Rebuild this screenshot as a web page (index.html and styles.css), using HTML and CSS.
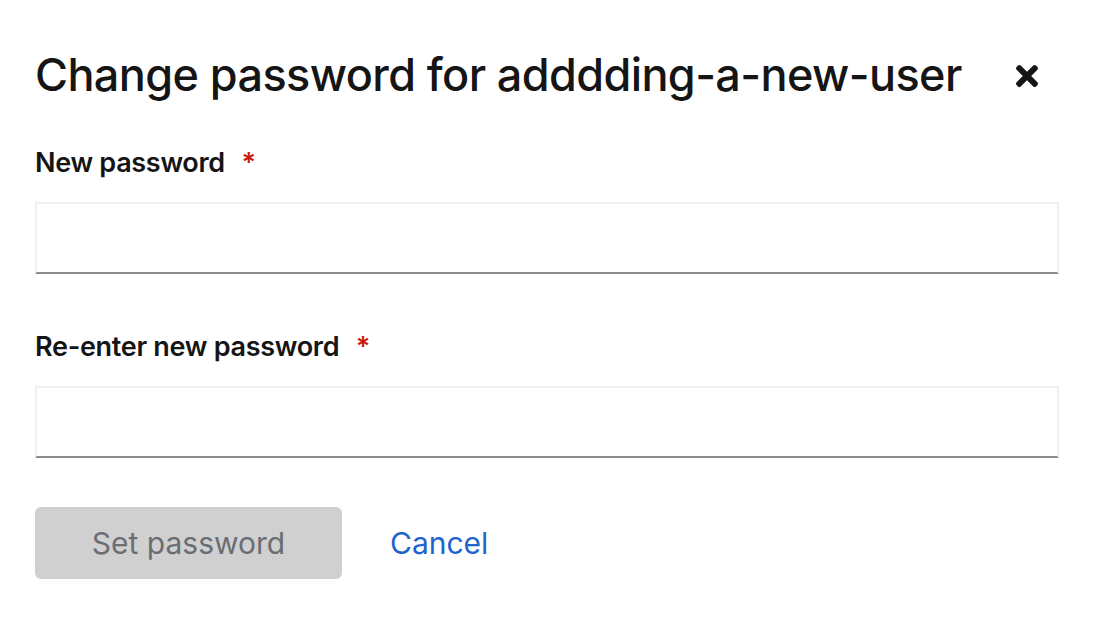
FILE: index.html
```html
<!DOCTYPE html>
<html lang="en">
<head>
    <meta charset="UTF-8">
    <meta name="viewport" content="width=device-width, initial-scale=1.0">
    <title>Change password</title>
    <link rel="stylesheet" href="styles.css">
</head>
<body>
    <div class="modal">
        <header class="modal-header">
            <h1 class="modal-title">Change password for adddding-a-new-user</h1>
            <button class="close-btn" type="button" aria-label="Close">
                <svg viewBox="0 80 352 352" width="22" height="22" aria-hidden="true">
                    <path d="M242.72 256l100.07-100.07c12.28-12.28 12.28-32.19 0-44.48l-22.24-22.24c-12.28-12.28-32.19-12.28-44.48 0L176 189.28 75.930 89.21c-12.28-12.28-32.19-12.28-44.48 0L9.21 111.45c-12.28 12.28-12.28 32.19 0 44.48L109.28 256 9.21 356.07c-12.28 12.28-12.28 32.19 0 44.48l22.24 22.240c12.28 12.28 32.2 12.28 44.48 0L176 322.72l100.07 100.07c12.28 12.28 32.2 12.28 44.480 0l22.24-22.24c12.28-12.28 12.28-32.19 0-44.48L242.72 256z"/>
                </svg>
            </button>
        </header>
        <form class="modal-form">
            <div class="form-group">
                <label for="password">New password <span class="required">*</span></label>
                <input type="password" id="password">
            </div>
            <div class="form-group">
                <label for="passwordConfirm">Re-enter new password <span class="required">*</span></label>
                <input type="password" id="passwordConfirm">
            </div>
            <div class="form-actions">
                <button type="submit" class="btn-primary" disabled>Set password</button>
                <button type="button" class="btn-link">Cancel</button>
            </div>
        </form>
    </div>
</body>
</html>
```
FILE: styles.css
```css
body {
    margin: 0;
    font-family: Inter, "Noto Sans", sans-serif;
    color: #151515;
    background: #fff;
}
.modal {
    padding: 0 39px 0 35px;
}
.modal-header {
    display: flex;
    justify-content: space-between;
    align-items: center;
    padding-top: 44px;
}
.modal-title {
    margin: 0;
    font-size: 45px;
    font-weight: 500;
    line-height: 62px;
    letter-spacing: -0.6px;
}
.close-btn {
    border: none;
    background: none;
    padding: 13px 21px 11px;
    display: flex;
    fill: #151515;
    cursor: pointer;
}
.modal-form {
    margin-top: 39px;
}
.form-group {
    display: grid;
    gap: 21px;
}
.form-group + .form-group {
    margin-top: 55px;
}
.form-group label {
    font-size: 27px;
    font-weight: 600;
    line-height: 36px;
    letter-spacing: -0.3px;
}
.required {
    color: #c9190b;
    margin-left: 10px;
}
.form-group input {
    box-sizing: border-box;
    height: 72px;
    border: 2px solid #f0f0f0;
    border-bottom-color: #8a8d90;
    font-size: 32px;
    padding: 10px 16px;
    outline: none;
}
.form-actions {
    display: flex;
    align-items: center;
    gap: 16px;
    margin-top: 49px;
}
.btn-primary {
    width: 307px;
    height: 72px;
    border: none;
    border-radius: 6px;
    background: #d0d0d0;
    color: #6a6e73;
    font-family: inherit;
    font-size: 30px;
}
.btn-link {
    border: none;
    background: none;
    padding: 12px 32px;
    color: #1f63cc;
    font-family: inherit;
    font-size: 30px;
}
```
